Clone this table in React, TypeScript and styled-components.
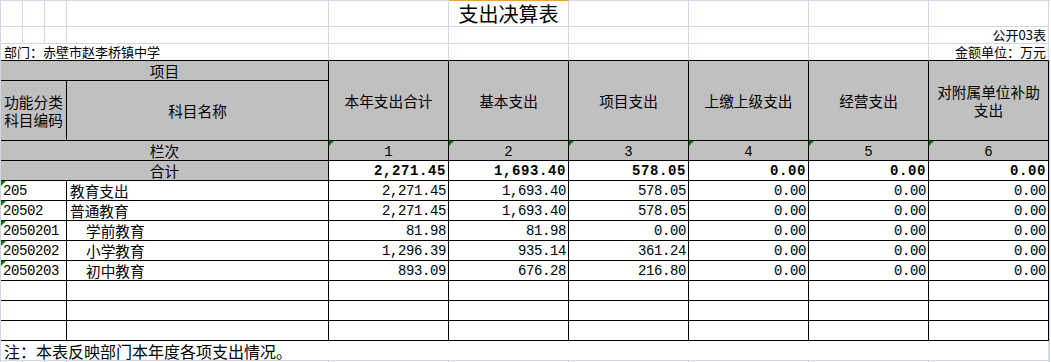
import React from 'react';
import styled, { createGlobalStyle, css } from 'styled-components';

const GRID = '#d0d7e5';
const INK = '#000000';
const HEAD = '#c0c0c0';
const MARK = '#f0a040';
const FLAG = '#008000';

type Edge = 'grid' | 'ink';
const edge = (e?: Edge) => (e === 'ink' ? INK : GRID);

const GlobalStyle = createGlobalStyle`
  html, body { margin: 0; padding: 0; background: #ffffff; overflow: hidden; }
  body { font-family: "Noto Sans CJK SC", "Noto Sans", sans-serif; color: #000; }
`;

const Sheet = styled.div`
  display: grid;
  grid-template-columns: 22px 22px 22px 262px repeat(6, 120px) 2px;
  grid-template-rows: 27px 17px 17px 20px 60px repeat(11, 20px) 20px;
  width: 1051px;
  height: 362px;
  box-sizing: border-box;
  border-left: 1px solid ${GRID};
  overflow: hidden;
`;

interface CellProps {
  $col: string;
  $row: string;
  $r?: Edge;
  $b?: Edge;
  $top?: string;
  $fill?: string;
  $align?: 'left' | 'center' | 'right';
  $padL?: number;
  $padR?: number;
  $flag?: boolean;
}

const Cell = styled.div<CellProps>`
  position: relative;
  box-sizing: border-box;
  grid-column: ${p => p.$col};
  grid-row: ${p => p.$row};
  display: flex;
  align-items: center;
  justify-content: ${p => (p.$align === 'right' ? 'flex-end' : p.$align === 'center' ? 'center' : 'flex-start')};
  text-align: ${p => p.$align ?? 'left'};
  padding: 0 ${p => p.$padR ?? 2}px 0 ${p => p.$padL ?? 2}px;
  background: ${p => p.$fill ?? '#ffffff'};
  border-right: 1px solid ${p => edge(p.$r)};
  border-bottom: 1px solid ${p => edge(p.$b)};
  ${p => p.$top && css`border-top: 1px solid ${p.$top};`}
  white-space: nowrap;
  font-size: 14.67px;
  line-height: 18px;
  ${p =>
    p.$flag &&
    css`
      &::before {
        content: '';
        position: absolute;
        top: 0;
        left: 0;
        border-top: 5px solid ${FLAG};
        border-right: 5px solid transparent;
      }
    `}
`;

const SideCell = styled(Cell)`
  border-right: none;
`;

const TitleCell = styled(Cell)`
  font-size: 20px;
  line-height: 24px;
  justify-content: center;
`;

const LabelCell = styled(Cell)`
  font-size: 13px;
  line-height: 16px;
`;

const HeadCell = styled(Cell)`
  background: ${HEAD};
  justify-content: center;
  text-align: center;
`;

const IndexCell = styled(HeadCell)`
  font-family: "Liberation Mono", monospace;
  font-size: 14px;
  padding-top: 2px;
`;

const CodeCell = styled(Cell)`
  font-family: "Liberation Mono", monospace;
  font-size: 14px;
  letter-spacing: -0.4px;
  padding-top: 1px;
`;

const NameCell = styled(Cell)<{ $indent?: boolean }>`
  padding-left: ${p => (p.$indent ? 19 : 3)}px;
  padding-top: 1px;
`;

const NumCell = styled(Cell)<{ $bold?: boolean }>`
  font-family: "Liberation Mono", monospace;
  font-size: 14px;
  justify-content: flex-end;
  padding-right: 2px;
  padding-top: 1px;
  font-weight: ${p => (p.$bold ? 700 : 400)};
  letter-spacing: ${p => (p.$bold ? '0.6px' : '-0.4px')};
`;

const NoteCell = styled(Cell)`
  font-size: 16px;
  line-height: 18px;
  padding-left: 3px;
`;

const cols = [1, 2, 3, 4, 5, 6, 7, 8, 9, 10];
const valueCols = [5, 6, 7, 8, 9, 10];

const heads: React.ReactNode[] = [
  '本年支出合计',
  '基本支出',
  '项目支出',
  '上缴上级支出',
  '经营支出',
  <>对附属单位补助<br />支出</>,
];

const total = ['2,271.45', '1,693.40', '578.05', '0.00', '0.00', '0.00'];

interface Line {
  code: string;
  name: string;
  indent?: boolean;
  values: string[];
}

const lines: Line[] = [
  { code: '205', name: '教育支出', values: ['2,271.45', '1,693.40', '578.05', '0.00', '0.00', '0.00'] },
  { code: '20502', name: '普通教育', values: ['2,271.45', '1,693.40', '578.05', '0.00', '0.00', '0.00'] },
  { code: '2050201', name: '学前教育', indent: true, values: ['81.98', '81.98', '0.00', '0.00', '0.00', '0.00'] },
  { code: '2050202', name: '小学教育', indent: true, values: ['1,296.39', '935.14', '361.24', '0.00', '0.00', '0.00'] },
  { code: '2050203', name: '初中教育', indent: true, values: ['893.09', '676.28', '216.80', '0.00', '0.00', '0.00'] },
  { code: '', name: '', values: ['', '', '', '', '', ''] },
  { code: '', name: '', values: ['', '', '', '', '', ''] },
  { code: '', name: '', values: ['', '', '', '', '', ''] },
];

export default function App() {
  return (
    <>
      <GlobalStyle />
      <Sheet>
        {/* Row 1: title */}
        {cols.map(c =>
          c === 6 ? (
            <TitleCell key={`t${c}`} $col={`${c}`} $row="1" $top={MARK}>
              支出决算表
            </TitleCell>
          ) : (
            <Cell key={`t${c}`} $col={`${c}`} $row="1" $top={GRID} />
          )
        )}

        {/* Row 2 */}
        {cols.slice(0, 9).map(c => (
          <Cell key={`p${c}`} $col={`${c}`} $row="2" />
        ))}
        <LabelCell $col="10" $row="2" $align="right">
          公开03表
        </LabelCell>

        {/* Row 3 */}
        <LabelCell $col="1 / 5" $row="3" $b="ink" $padL={3}>
          部门：赤壁市赵李桥镇中学
        </LabelCell>
        {[5, 6, 7, 8, 9].map(c => (
          <Cell key={`d${c}`} $col={`${c}`} $row="3" $b="ink" />
        ))}
        <LabelCell $col="10" $row="3" $b="ink" $align="right">
          金额单位：万元
        </LabelCell>

        {/* Header */}
        <HeadCell $col="1 / 5" $row="4" $r="ink" $b="ink">
          项目
        </HeadCell>
        {valueCols.map((c, i) => (
          <HeadCell key={`h${c}`} $col={`${c}`} $row="4 / 6" $r="ink" $b="ink">
            <span>{heads[i]}</span>
          </HeadCell>
        ))}
        <HeadCell $col="1 / 4" $row="5" $r="ink" $b="ink">
          <span>
            功能分类
            <br />
            科目编码
          </span>
        </HeadCell>
        <HeadCell $col="4" $row="5" $r="ink" $b="ink">
          科目名称
        </HeadCell>

        {/* 栏次 */}
        <HeadCell $col="1 / 5" $row="6" $r="ink" $b="ink">
          栏次
        </HeadCell>
        {valueCols.map((c, i) => (
          <IndexCell key={`i${c}`} $col={`${c}`} $row="6" $r="ink" $b="ink" $flag>
            {i + 1}
          </IndexCell>
        ))}

        {/* 合计 */}
        <HeadCell $col="1 / 5" $row="7" $r="ink" $b="ink">
          合计
        </HeadCell>
        {valueCols.map((c, i) => (
          <NumCell key={`s${c}`} $col={`${c}`} $row="7" $r="ink" $b="ink" $bold>
            {total[i]}
          </NumCell>
        ))}

        {/* Data rows */}
        {lines.map((line, li) => {
          const row = `${8 + li}`;
          return (
            <React.Fragment key={`l${li}`}>
              <CodeCell $col="1 / 4" $row={row} $r="ink" $b="ink" $flag={line.code !== ''}>
                {line.code}
              </CodeCell>
              <NameCell $col="4" $row={row} $r="ink" $b="ink" $indent={line.indent}>
                {line.name}
              </NameCell>
              {valueCols.map((c, i) => (
                <NumCell key={`v${c}`} $col={`${c}`} $row={row} $r="ink" $b="ink">
                  {line.values[i]}
                </NumCell>
              ))}
            </React.Fragment>
          );
        })}

        {/* Note */}
        <NoteCell $col="1 / 11" $row="16">
          注：本表反映部门本年度各项支出情况。
        </NoteCell>
        {cols.map(c => (
          <Cell key={`z${c}`} $col={`${c}`} $row="17" />
        ))}

        {/* Column K edge */}
        <SideCell $col="11" $row="1 / 4" $top={GRID} />
        <SideCell $col="11" $row="4 / 18" style={{ borderLeft: `1px solid ${GRID}` }} />
      </Sheet>
    </>
  );
}
